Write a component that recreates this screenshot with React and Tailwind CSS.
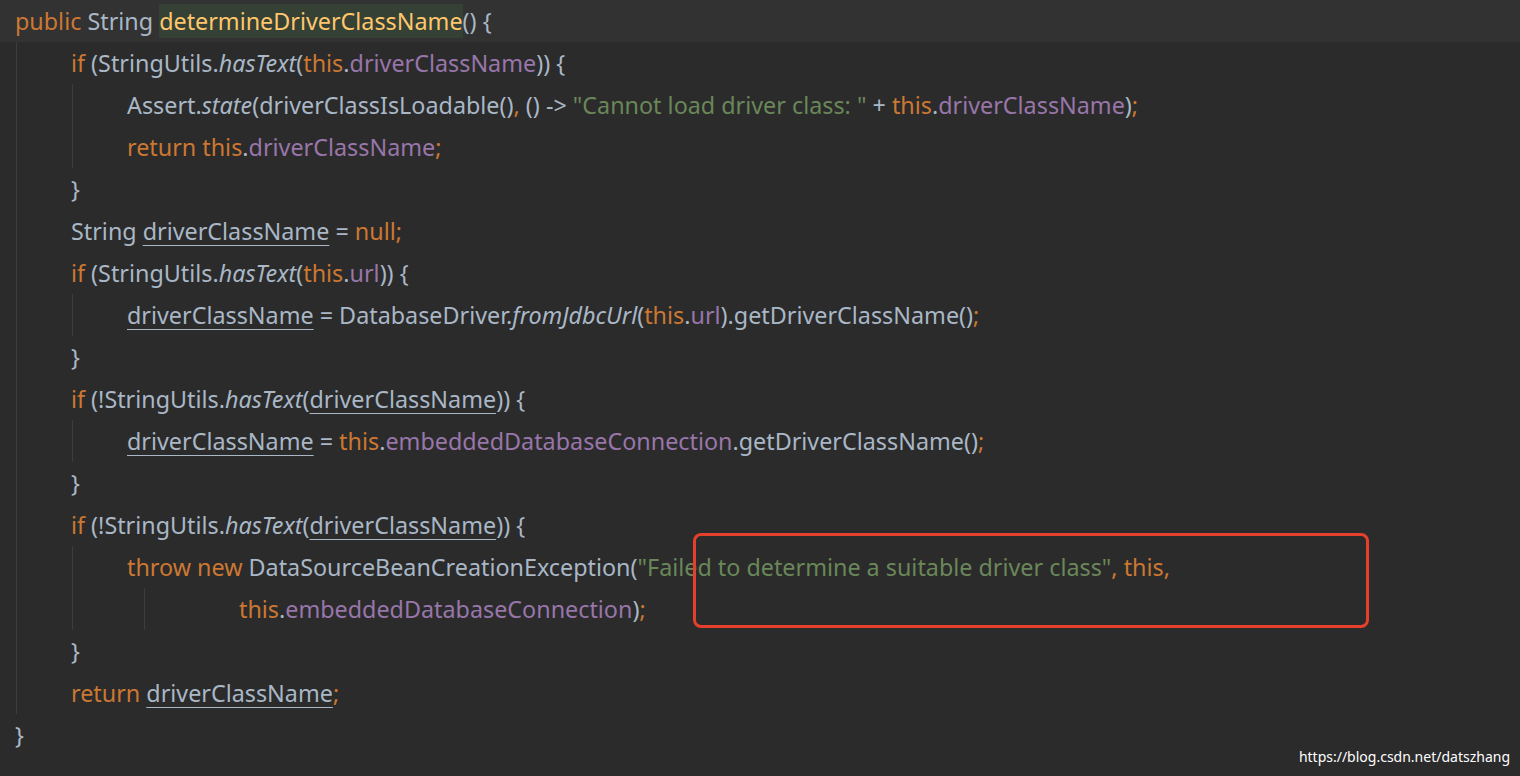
const K = "text-[#cc7832]", T = "text-[#a9b7c6]", F = "text-[#9876aa]", S = "text-[#6a8759]", M = "text-[#ffc66d]";
const t = (s, c = T, x = "") => ({ s, c, x });
const U = "underline decoration-[#a9b7c6] underline-offset-[5px] decoration-1";

const lines = [
  { g: [], cur: true, toks: [t("public ", K), t("String "), t("determineDriverClassName", M, "bg-[#344134]"), t("() {")] },
  { g: [0], toks: [t("if ", K), t("(StringUtils."), t("hasText", T, "italic"), t("("), t("this", K), t("."), t("driverClassName", F), t(")) {")] },
  { g: [0, 1], toks: [t("Assert."), t("state", T, "italic"), t("(driverClassIsLoadable()"), t(", ", K), t("() -> "), t("\"Cannot load driver class: \"", S), t(" + "), t("this", K), t("."), t("driverClassName", F), t(")"), t(";", K)] },
  { g: [0, 1], toks: [t("return this", K), t("."), t("driverClassName", F), t(";", K)] },
  { g: [0], toks: [t("}")] },
  { g: [0], toks: [t("String "), t("driverClassName", T, U), t(" = "), t("null;", K)] },
  { g: [0], toks: [t("if ", K), t("(StringUtils."), t("hasText", T, "italic"), t("("), t("this", K), t("."), t("url", F), t(")) {")] },
  { g: [0, 1], toks: [t("driverClassName", T, U), t(" = DatabaseDriver."), t("fromJdbcUrl", T, "italic"), t("("), t("this", K), t("."), t("url", F), t(").getDriverClassName()"), t(";", K)] },
  { g: [0], toks: [t("}")] },
  { g: [0], toks: [t("if ", K), t("(!StringUtils."), t("hasText", T, "italic"), t("("), t("driverClassName", T, U), t(")) {")] },
  { g: [0, 1], toks: [t("driverClassName", T, U), t(" = "), t("this", K), t("."), t("embeddedDatabaseConnection", F), t(".getDriverClassName()"), t(";", K)] },
  { g: [0], toks: [t("}")] },
  { g: [0], toks: [t("if ", K), t("(!StringUtils."), t("hasText", T, "italic"), t("("), t("driverClassName", T, U), t(")) {")] },
  { g: [0, 1], toks: [t("throw new ", K), t("DataSourceBeanCreationException("), t("\"Failed to determine a suitable driver class\"", S), t(", this,", K)] },
  { g: [0, 1, 2], cont: true, toks: [t("this", K), t("."), t("embeddedDatabaseConnection", F), t(")"), t(";", K)] },
  { g: [0], toks: [t("}")] },
  { g: [0], toks: [t("return ", K), t("driverClassName", T, U), t(";", K)] },
  { g: [], toks: [t("}")] },
];

function indentOf(i) {
  const l = lines[i];
  if (l.cont) return 16;
  if (i === 0 || i === lines.length - 1) return 0;
  return l.g.length * 4;
}

export default function App() {
  return (
    <div className="relative w-[1520px] h-[776px] bg-[#2b2b2b] overflow-hidden pl-[15px] font-['Liberation_Mono'] text-[23.33px] whitespace-pre">
      {lines.map((l, i) => {
        const ind = indentOf(i);
        return (
          <div key={i} className={`relative flex items-center h-[42px] ${l.cur ? "bg-[#323232] -ml-[15px] pl-[15px]" : ""}`}>
            {l.g.map((g) => (
              <div key={g} className="absolute top-0 h-[42px] w-px bg-[#3c3c3c]" style={{ left: g === 2 ? 129 : 1 + g * 56 }} />
            ))}
            <span style={{ width: ind * 14 }} className="inline-block shrink-0" />
            {l.toks.map((tk, j) => (
              <span key={j} className={`${tk.c} ${tk.x}`}>{tk.s}</span>
            ))}
          </div>
        );
      })}
      <div className="absolute left-[693px] top-[533px] w-[676px] h-[95px] border-[3px] border-[#e5402c] rounded-[8px]" />
      <div className="absolute right-[10px] bottom-[9px] text-white text-[14px] font-['Liberation_Sans']">https://blog.csdn.net/datszhang</div>
    </div>
  );
}
